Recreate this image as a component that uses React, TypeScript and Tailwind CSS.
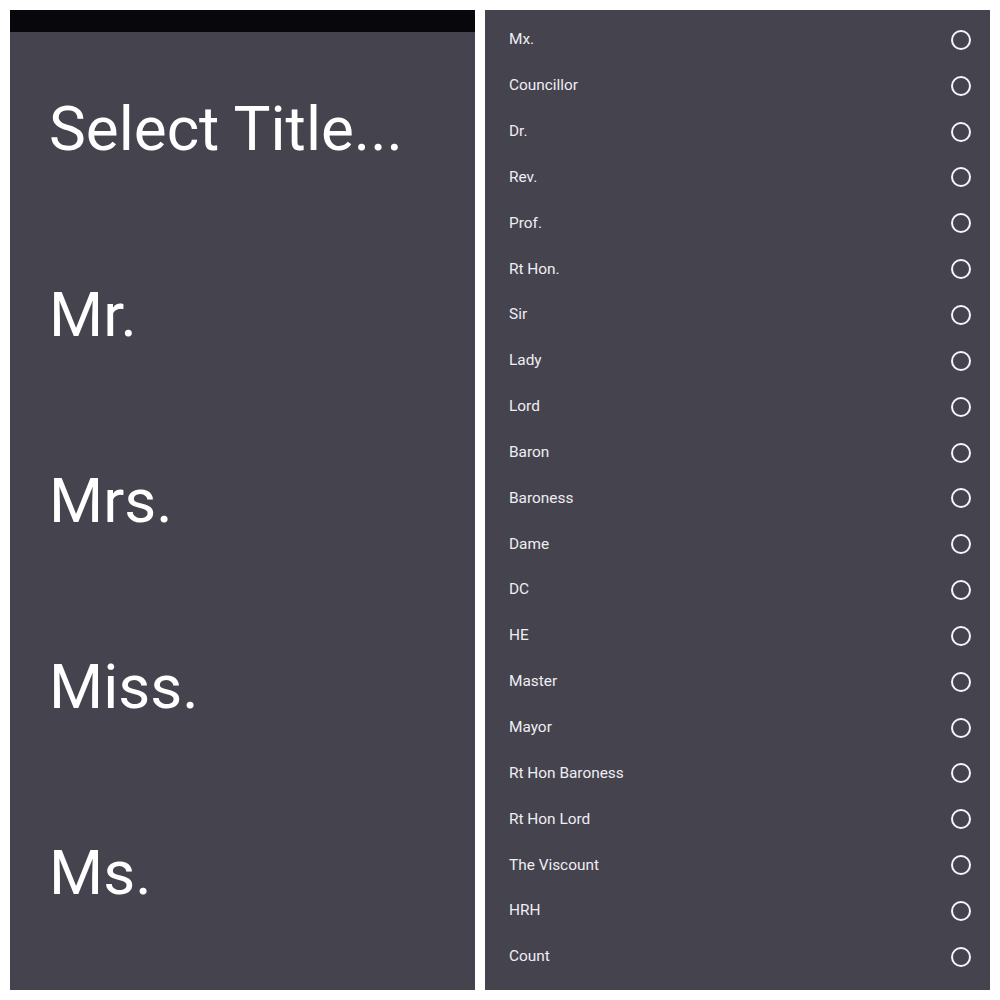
const basicTitles = ['Select Title...', 'Mr.', 'Mrs.', 'Miss.', 'Ms.'];

const otherTitles = [
  'Mx.',
  'Councillor',
  'Dr.',
  'Rev.',
  'Prof.',
  'Rt Hon.',
  'Sir',
  'Lady',
  'Lord',
  'Baron',
  'Baroness',
  'Dame',
  'DC',
  'HE',
  'Master',
  'Mayor',
  'Rt Hon Baroness',
  'Rt Hon Lord',
  'The Viscount',
  'HRH',
  'Count',
];

export default function App() {
  return (
    <div className="w-[1000px] h-[1000px] bg-white p-[10px] flex gap-[10px] font-['Roboto',sans-serif]">
      {/* Left: big picker */}
      <div className="w-[465px] h-[980px] bg-[#45434e] flex flex-col overflow-hidden">
        <div className="h-[22px] bg-[#08070b]" />
        <div className="pt-[4px] flex flex-col">
          {basicTitles.map((t) => (
            <div key={t} className="h-[186px] leading-[186px] pl-[39px] text-[62px] text-white whitespace-nowrap">
              {t}
            </div>
          ))}
        </div>
      </div>

      {/* Right: radio list */}
      <div className="w-[505px] h-[980px] bg-[#45434e] flex flex-col pt-[7px] overflow-hidden">
        {otherTitles.map((t) => (
          <div key={t} className="h-[45.85px] flex items-center justify-between pl-[24px] pr-[19px]">
            <span className="text-[15.4px] text-[#efeef3]">{t}</span>
            <div className="w-[20px] h-[20px] rounded-full border-2 border-[#f6f5f9]" />
          </div>
        ))}
      </div>
    </div>
  );
}
